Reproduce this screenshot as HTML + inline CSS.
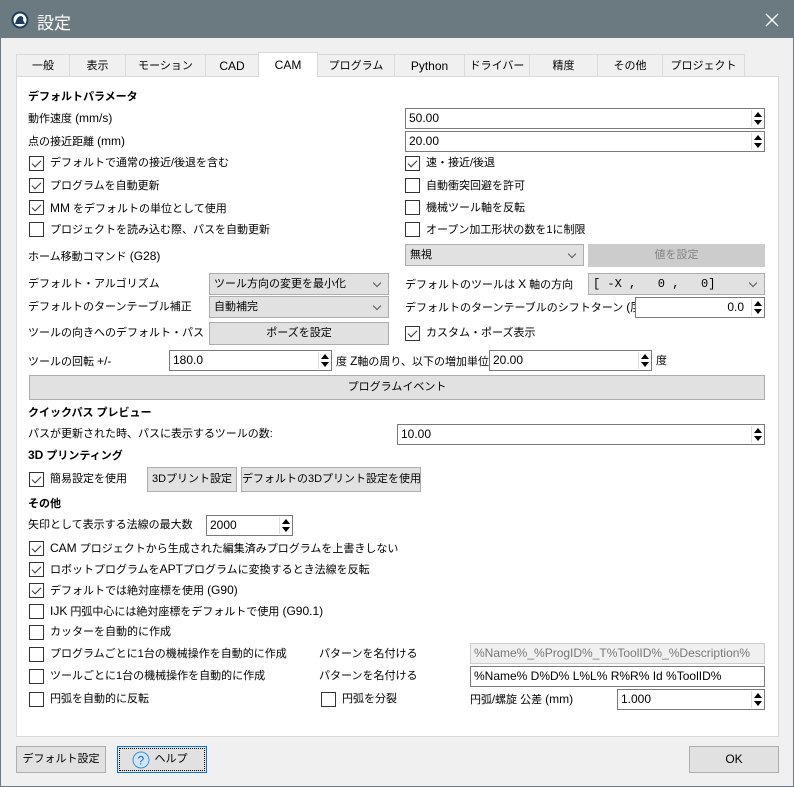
<!DOCTYPE html>
<html><head><meta charset="utf-8"><style>
*{box-sizing:border-box;margin:0;padding:0}
body{width:794px;height:787px;background:#f0f0f0;font-family:"Liberation Sans","Noto Sans CJK JP",sans-serif;font-size:11px;color:#000;position:relative;overflow:hidden;border:1px solid #6b7a80}
.a{position:absolute;white-space:nowrap}
.t{position:absolute;white-space:nowrap;line-height:16px}
.b{font-weight:bold}
.title{position:absolute;left:0;top:0;width:794px;height:37px;background:#6b7a80;color:#fff}
.tab{position:absolute;top:53px;height:23px;border:1px solid #d9d9d9;border-bottom:none;background:#f0f0f0;text-align:center;line-height:22px;white-space:nowrap}
.panel{position:absolute;left:15px;top:75px;width:763px;height:661px;background:#fff;border:1px solid #d9d9d9}
.in{position:absolute;border:1px solid #7a7a7a;background:#fff;height:21px;line-height:19px;padding-left:3px;white-space:nowrap;font-size:12px}
.sp{position:absolute;right:1px;top:1px;width:12px;height:17px;border-left:1px solid #ddd}
.sp:before{content:"";position:absolute;left:2px;top:2px;border:4px solid transparent;border-bottom:5px solid #000;border-top:none}
.sp:after{content:"";position:absolute;left:2px;top:10px;border:4px solid transparent;border-top:5px solid #000;border-bottom:none}
.cb{position:absolute;width:15px;height:15px;border:1px solid #333;background:#fff}
.cb.c:after{content:"";position:absolute;left:4px;top:1px;width:4px;height:8px;border:solid #333;border-width:0 1.5px 1.5px 0;transform:rotate(45deg)}
.btn{position:absolute;background:#e1e1e1;border:1px solid #adadad;text-align:center;line-height:21px;white-space:nowrap}
.cmb{position:absolute;background:#e1e1e1;border:1px solid #adadad;height:22px;line-height:20px;padding-left:4px;white-space:nowrap}
.cmb:after{content:"";position:absolute;right:8px;top:6px;width:5px;height:5px;border:solid #555;border-width:0 1px 1px 0;transform:rotate(45deg)}
</style></head><body>
<div class="title">
<svg class="a" style="left:10px;top:10px" width="18" height="18" viewBox="0 0 18 18"><circle cx="9" cy="9" r="8.5" fill="#1d3c5a"/><circle cx="9" cy="9" r="6.5" fill="#fff"/><path d="M4 13 Q6 5 10 5 Q13 6 12 9 L14 13 Z" fill="#1d3c5a"/></svg>
<div class="a" style="left:36px;top:8px;font-size:17px">設定</div>
<svg class="a" style="left:764px;top:12px" width="14" height="14"><path d="M1 1L13 13M13 1L1 13" stroke="#fff" stroke-width="1.3"/></svg>
</div>
<div class="tab" style="left:15px;width:54px">一般</div>
<div class="tab" style="left:68px;width:57px">表示</div>
<div class="tab" style="left:124px;width:81px">モーション</div>
<div class="tab" style="left:204px;width:54px;font-size:12px">CAD</div>
<div class="tab" style="left:316px;width:78px">プログラム</div>
<div class="tab" style="left:393px;width:71px;font-size:12px">Python</div>
<div class="tab" style="left:463px;width:66px">ドライバー</div>
<div class="tab" style="left:528px;width:69px">精度</div>
<div class="tab" style="left:596px;width:66px">その他</div>
<div class="tab" style="left:661px;width:83px">プロジェクト</div>
<div class="panel"></div>
<div class="tab" style="left:257px;top:51px;width:60px;height:25px;background:#fff;z-index:2;line-height:24px;font-size:12px">CAM</div>

<div class="t b" style="left:27px;top:88px">デフォルトパラメータ</div>
<div class="t" style="left:27px;top:109px">動作速度 <span style="font-size:12px">(mm/s)</span></div>
<div class="in" style="left:404px;top:107px;width:360px">50.00<div class="sp"></div></div>
<div class="t" style="left:27px;top:132px">点の接近距離 <span style="font-size:12px">(mm)</span></div>
<div class="in" style="left:404px;top:130px;width:360px">20.00<div class="sp"></div></div>

<div class="cb c" style="left:28px;top:155px"></div><div class="t" style="left:49px;top:154px">デフォルトで通常の接近/後退を含む</div>
<div class="cb c" style="left:28px;top:177px"></div><div class="t" style="left:49px;top:177px">プログラムを自動更新</div>
<div class="cb c" style="left:28px;top:199px"></div><div class="t" style="left:49px;top:199px"><span style="font-size:12px">MM</span> をデフォルトの単位として使用</div>
<div class="cb" style="left:28px;top:221px"></div><div class="t" style="left:49px;top:221px">プロジェクトを読み込む際、パスを自動更新</div>
<div class="cb c" style="left:404px;top:155px"></div><div class="t" style="left:425px;top:154px">速・接近/後退</div>
<div class="cb" style="left:404px;top:177px"></div><div class="t" style="left:425px;top:177px">自動衝突回避を許可</div>
<div class="cb" style="left:404px;top:199px"></div><div class="t" style="left:425px;top:199px">機械ツール軸を反転</div>
<div class="cb" style="left:404px;top:221px"></div><div class="t" style="left:425px;top:221px">オープン加工形状の数を1に制限</div>

<div class="t" style="left:27px;top:247px">ホーム移動コマンド <span style="font-size:12px">(G28)</span></div>
<div class="cmb" style="left:404px;top:243px;width:179px">無視</div>
<div class="btn" style="left:587px;top:243px;width:177px;height:23px;background:#ccc;border-color:#ccc;color:#838383">値を設定</div>

<div class="t" style="left:27px;top:275px">デフォルト・アルゴリズム</div>
<div class="cmb" style="left:208px;top:272px;width:180px">ツール方向の変更を最小化</div>
<div class="t" style="left:404px;top:275px">デフォルトのツールは <span style="font-size:12px">X</span> 軸の方向</div>
<div class="cmb" style="left:587px;top:272px;width:177px;font-family:'Liberation Mono',monospace;white-space:pre;font-size:12px">[ -X ,   0 ,   0]</div>
<div class="t" style="left:27px;top:298px">デフォルトのターンテーブル補正</div>
<div class="cmb" style="left:208px;top:295px;width:180px">自動補完</div>
<div class="t" style="left:404px;top:298px">デフォルトのターンテーブルのシフトターン <span style="font-size:12px">(度)</span></div>
<div class="in" style="left:634px;top:296px;width:130px;text-align:right;padding-right:20px">0.0<div class="sp"></div></div>
<div class="t" style="left:27px;top:324px">ツールの向きへのデフォルト・パス</div>
<div class="btn" style="left:208px;top:321px;width:180px;height:23px">ポーズを設定</div>
<div class="cb c" style="left:404px;top:325px"></div><div class="t" style="left:425px;top:324px">カスタム・ポーズ表示</div>

<div class="t" style="left:27px;top:352px">ツールの回転 <span style="font-size:12px">+/-</span></div>
<div class="in" style="left:168px;top:349px;width:163px">180.0<div class="sp"></div></div>
<div class="t" style="left:335px;top:352px">度 <span style="font-size:12px">Z</span>軸の周り、以下の増加単位で</div>
<div class="in" style="left:488px;top:349px;width:163px">20.00<div class="sp"></div></div>
<div class="t" style="left:655px;top:352px">度</div>
<div class="btn" style="left:28px;top:374px;width:736px;height:25px;line-height:23px">プログラムイベント</div>

<div class="t b" style="left:27px;top:404px">クイックパス プレビュー</div>
<div class="t" style="left:27px;top:425px">パスが更新された時、パスに表示するツールの数:</div>
<div class="in" style="left:396px;top:423px;width:368px">10.00<div class="sp"></div></div>
<div class="t b" style="left:27px;top:446px"><span style="font-size:12px">3D</span> プリンティング</div>
<div class="cb c" style="left:28px;top:471px"></div><div class="t" style="left:49px;top:470px">簡易設定を使用</div>
<div class="btn" style="left:146px;top:466px;width:90px;height:25px;line-height:23px">3Dプリント設定</div>
<div class="btn" style="left:240px;top:466px;width:180px;height:25px;line-height:23px">デフォルトの3Dプリント設定を使用</div>
<div class="t b" style="left:27px;top:495px">その他</div>
<div class="t" style="left:27px;top:516px">矢印として表示する法線の最大数</div>
<div class="in" style="left:205px;top:514px;width:87px">2000<div class="sp"></div></div>

<div class="cb c" style="left:28px;top:540px"></div><div class="t" style="left:49px;top:539px"><span style="font-size:12px">CAM</span> プロジェクトから生成された編集済みプログラムを上書きしない</div>
<div class="cb c" style="left:28px;top:561px"></div><div class="t" style="left:49px;top:560px">ロボットプログラムを<span style="font-size:12px">APT</span>プログラムに変換するとき法線を反転</div>
<div class="cb c" style="left:28px;top:582px"></div><div class="t" style="left:49px;top:581px">デフォルトでは絶対座標を使用 <span style="font-size:12px">(G90)</span></div>
<div class="cb" style="left:28px;top:603px"></div><div class="t" style="left:49px;top:602px"><span style="font-size:12px">IJK</span> 円弧中心には絶対座標をデフォルトで使用 <span style="font-size:12px">(G90.1)</span></div>
<div class="cb" style="left:28px;top:624px"></div><div class="t" style="left:49px;top:623px">カッターを自動的に作成</div>
<div class="cb" style="left:28px;top:646px"></div><div class="t" style="left:49px;top:645px">プログラムごとに1台の機械操作を自動的に作成</div>
<div class="cb" style="left:28px;top:668px"></div><div class="t" style="left:49px;top:667px">ツールごとに1台の機械操作を自動的に作成</div>
<div class="cb" style="left:28px;top:691px"></div><div class="t" style="left:49px;top:690px">円弧を自動的に反転</div>
<div class="t" style="left:318px;top:645px">パターンを名付ける</div>
<div class="in" style="left:469px;top:642px;width:295px;background:#f0f0f0;border-color:#ccc;color:#777;overflow:hidden">%Name%_%ProgID%_T%ToolID%_%Description%</div>
<div class="t" style="left:318px;top:667px">パターンを名付ける</div>
<div class="in" style="left:469px;top:665px;width:295px">%Name% D%D% L%L% R%R% Id %ToolID%</div>
<div class="cb" style="left:320px;top:691px"></div><div class="t" style="left:341px;top:690px">円弧を分裂</div>
<div class="t" style="left:469px;top:690px">円弧/螺旋 公差 <span style="font-size:12px">(mm)</span></div>
<div class="in" style="left:616px;top:688px;width:148px">1.000<div class="sp"></div></div>

<div class="btn" style="left:15px;top:745px;width:90px;height:27px;line-height:25px">デフォルト設定</div>
<div class="btn" style="left:116px;top:745px;width:90px;height:27px;line-height:25px;border:1px solid #0078d7;outline:1px dotted #000;outline-offset:-3px;padding-left:18px">ヘルプ
<svg class="a" style="left:14px;top:4px" width="18" height="18"><circle cx="9" cy="9" r="8" fill="#cfe6f7" stroke="#3b8fd4"/><text x="5.5" y="13.5" font-size="12" fill="#1d63b3" font-family="Liberation Sans">?</text></svg></div>
<div class="btn" style="left:688px;top:745px;width:90px;height:27px;line-height:25px;font-size:12px">OK</div>
</body></html>
